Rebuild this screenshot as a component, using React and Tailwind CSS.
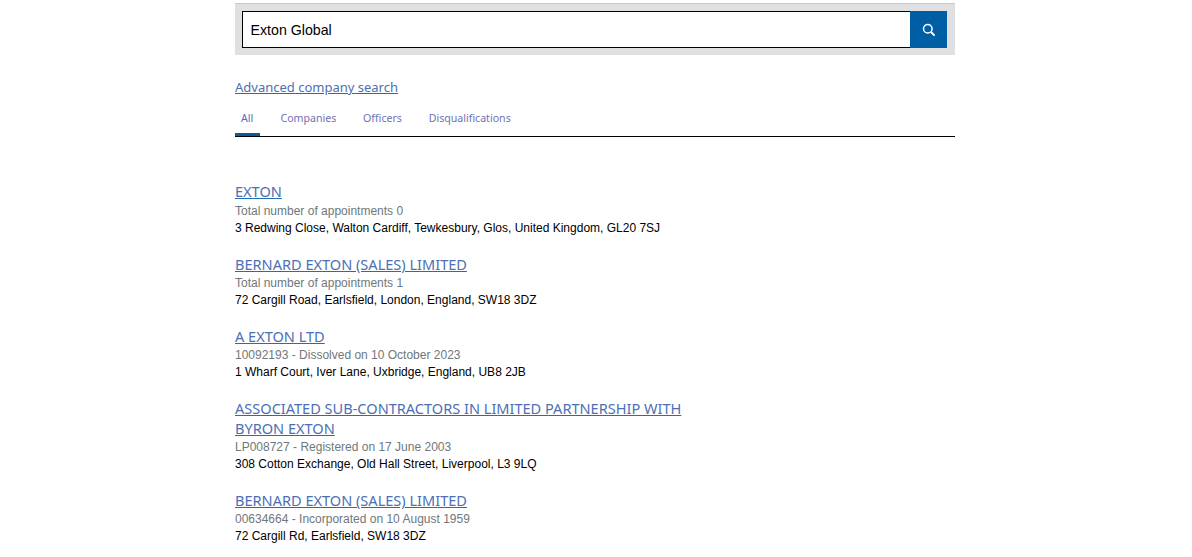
const results = [
  { title: ["EXTON"], meta: "Total number of appointments 0", address: "3 Redwing Close, Walton Cardiff, Tewkesbury, Glos, United Kingdom, GL20 7SJ" },
  { title: ["BERNARD EXTON (SALES) LIMITED"], meta: "Total number of appointments 1", address: "72 Cargill Road, Earlsfield, London, England, SW18 3DZ" },
  { title: ["A EXTON LTD"], meta: "10092193 - Dissolved on 10 October 2023", address: "1 Wharf Court, Iver Lane, Uxbridge, England, UB8 2JB" },
  { title: ["ASSOCIATED SUB-CONTRACTORS IN LIMITED PARTNERSHIP WITH", "BYRON EXTON"], meta: "LP008727 - Registered on 17 June 2003", address: "308 Cotton Exchange, Old Hall Street, Liverpool, L3 9LQ" },
  { title: ["BERNARD EXTON (SALES) LIMITED"], meta: "00634664 - Incorporated on 10 August 1959", address: "72 Cargill Rd, Earlsfield, SW18 3DZ" },
]

const tabs = ["Companies", "Officers", "Disqualifications"]

export default function App() {
  return (
    <div className="h-[557px] overflow-hidden bg-white pt-[3px] font-['Liberation_Sans',sans-serif]">
      <div className="ml-[235px] w-[720px]">
        <div className="border-t border-[#c8c8c8] bg-[#dee0e2] py-[7px] pl-[7px] pr-[8px]">
          <div className="flex h-[37px]">
            <div className="flex flex-1 items-center border-[1.5px] border-r-0 border-black bg-white pl-[7.5px] pt-[2px] text-[14.2px] text-black">
              Exton Global
            </div>
            <button className="flex w-[37px] items-center justify-center bg-[#005ea5]">
              <svg width="14" height="14" viewBox="0 0 14 14" fill="none" stroke="white">
                <circle cx="5.8" cy="5.8" r="4.3" strokeWidth="1.5" />
                <path d="M9 9l3.6 3.6" strokeWidth="1.9" />
              </svg>
            </button>
          </div>
        </div>

        <a className="mt-[24px] block font-['Noto_Sans',sans-serif] text-[13px] leading-[17px] text-[#4c6fb5] underline decoration-[#1d70b8]">
          Advanced company search
        </a>

        <div className="mt-[15px] flex border-b border-black font-['Noto_Sans',sans-serif] text-[10.6px] leading-[14px] text-[#6f72b3]">
          <div className="w-[25px] border-b-[3px] border-[#005ea5] pb-[8px] pl-[6px] text-[#4c6fb5]">All</div>
          <div className="ml-[20.5px] flex gap-[26.8px]">
            {tabs.map((t) => (
              <div key={t}>{t}</div>
            ))}
          </div>
        </div>

        <div className="mt-[46.4px] flex flex-col gap-[19px]">
          {results.map((r, i) => (
            <div key={i}>
              <a className="block font-['Noto_Sans',sans-serif] text-[14.55px] leading-[17px] text-[#4c6fb5] underline decoration-[#1d70b8]">
                {r.title.map((line) => (
                  <div key={line} className="mb-[3px] last:mb-[2.2px]">{line}</div>
                ))}
              </a>
              <p className="text-[12px] leading-[17px] text-[#6f777b]">{r.meta}</p>
              <p className="text-[12px] leading-[17px] text-black">{r.address}</p>
            </div>
          ))}
        </div>
      </div>
    </div>
  )
}
